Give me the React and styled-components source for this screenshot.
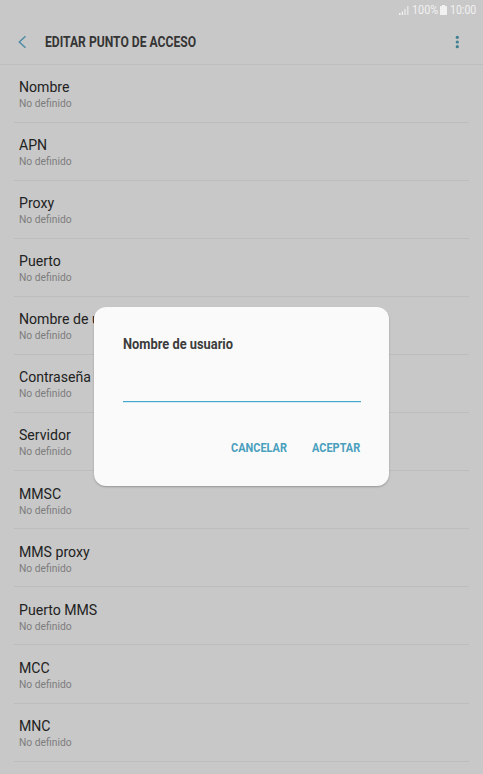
import React from 'react';
import styled, { createGlobalStyle } from 'styled-components';

const GlobalStyle = createGlobalStyle`
  * {
    box-sizing: border-box;
  }
  body {
    margin: 0;
    background-color: #c8c8c8;
    font-family: Roboto, "Liberation Sans", sans-serif;
    overflow: hidden;
  }
`;
const Screen = styled.div`
  position: relative;
  height: 100vh;
  overflow: hidden;
  background-color: #c8c8c8;
`;
const StatusBar = styled.div`
  display: flex;
  align-items: center;
  justify-content: flex-end;
  height: 20px;
  padding-right: 6px;
  color: #f1f1f1;
  svg {
    display: block;
    flex: none;
  }
`;
const Condensed = styled.span`
  display: block;
  flex: none;
  width: ${(props) => props.$width}px;
  white-space: nowrap;
  transform: scaleX(${(props) => props.$scale || 0.88});
  transform-origin: left center;
`;
const StatusText = styled(Condensed)`
  font-size: 12px;
  line-height: 21px;
  margin-left: ${(props) => props.$gap}px;
`;
const Header = styled.header`
  display: flex;
  align-items: center;
  height: 45px;
  padding: 0 19px 0 17px;
  border-bottom: 1px solid #bfbfbf;
`;
const IconButton = styled.button`
  display: flex;
  flex: none;
  padding: 0;
  border: 0;
  background: none;
  color: #4b8ba5;
`;
const Title = styled.h1`
  flex: 1;
  margin: 0 0 0 17px;
  font-size: 14px;
  font-weight: 700;
  line-height: 20px;
  color: #353535;
`;
const List = styled.ul`
  margin: 0;
  padding: 0 14px;
  list-style: none;
`;
const Item = styled.li`
  height: 58.05px;
  padding: 13.2px 5px 0;
  border-bottom: 1px solid #bdbdbd;
`;
const Name = styled.p`
  margin: 0;
  font-size: 14.1px;
  line-height: 18px;
  color: #222;
`;
const Value = styled.p`
  margin: 0;
  font-size: 10.3px;
  line-height: 15px;
  color: #7d7d7d;
`;
const Overlay = styled.div`
  position: absolute;
  inset: 0;
  padding: 307px 94px 0;
`;
const Dialog = styled.div`
  height: 179px;
  padding: 27px 28.5px 0;
  border-radius: 12px;
  background-color: #fafafa;
  box-shadow: 0 1px 2px rgba(0, 0, 0, 0.25);
`;
const DialogTitle = styled.h2`
  margin: 0;
  font-size: 14px;
  font-weight: 700;
  line-height: 20px;
  color: #3c3c3c;
`;
const Field = styled.div`
  height: 30px;
  margin-top: 18px;
  border-bottom: 1px solid #45a8cc;
  box-shadow: 0 1px 0 rgba(69, 168, 204, 0.2);
`;
const Input = styled.input`
  display: block;
  width: 100%;
  height: 28px;
  padding: 0;
  border: 0;
  outline: 0;
  background: none;
  font: 14px Roboto, sans-serif;
`;
const Actions = styled.div`
  display: flex;
  justify-content: flex-end;
  gap: 25.5px;
  margin-top: 36px;
`;
const Button = styled.button`
  padding: 0;
  border: 0;
  background: none;
  font: 700 13px/20px Roboto, "Liberation Sans", sans-serif;
  text-align: left;
  color: #4a9fbd;
`;

const fields = [
  'Nombre',
  'APN',
  'Proxy',
  'Puerto',
  'Nombre de usuario',
  'Contraseña',
  'Servidor',
  'MMSC',
  'MMS proxy',
  'Puerto MMS',
  'MCC',
  'MNC',
];

const SignalIcon = () => (
  <svg width="11" height="11" viewBox="0 0 11 11" fill="currentColor">
    <path d="M0 8h1.500v2H0z" />
    <path d="M2.700 6.500h1.400V10H2.700z" />
    <path d="M5.300 4h1.400v6H5.300z" opacity=".8" />
    <path d="M8 1h1.500v9H8z" opacity=".65" />
  </svg>
);

const BatteryIcon = () => (
  <svg width="7" height="10" viewBox="0 0 7 10" fill="currentColor">
    <path d="M2 0h3v1h1.400q.6 0 .6.6v7.800q0 .6-.6.6H.6q-.6 0-.6-.6V1.600q0-.6.6-.6H2z" />
  </svg>
);

const App = () => {
  const [user, setUser] = React.useState('');

  return (
    <Screen>
      <GlobalStyle />
      <StatusBar>
        <SignalIcon />
        <StatusText $width={28} $scale={0.9} $gap={2}>100%</StatusText>
        <BatteryIcon />
        <StatusText $width={27.500} $scale={0.88} $gap={3}>10:00</StatusText>
      </StatusBar>
      <Header>
        <IconButton aria-label="Atrás">
          <svg width="11" height="14" viewBox="0 0 11 14" fill="none" stroke="currentColor" strokeWidth="1.4">
            <path d="M8.500 1.300L2.300 7l6.200 5.700" />
          </svg>
        </IconButton>
        <Title>
          <Condensed $width={151} $scale={0.866}>EDITAR PUNTO DE ACCESO</Condensed>
        </Title>
        <IconButton aria-label="Más opciones">
          <svg width="14" height="14" viewBox="0 0 14 14" fill="#3f7f92">
            <circle cx="7.300" cy="2.300" r="1.600" />
            <circle cx="7.300" cy="7" r="1.600" />
            <circle cx="7.300" cy="11.700" r="1.600" />
          </svg>
        </IconButton>
      </Header>
      <List>
        {fields.map((field) => (
          <Item key={field}>
            <Name>{field}</Name>
            <Value>No definido</Value>
          </Item>
        ))}
      </List>
      <Overlay>
        <Dialog role="dialog">
          <DialogTitle>
            <Condensed $width={111} $scale={0.918}>Nombre de usuario</Condensed>
          </DialogTitle>
          <Field>
            <Input value={user} onChange={(e) => setUser(e.target.value)} aria-label="Nombre de usuario" />
          </Field>
          <Actions>
            <Button>
              <Condensed $width={56} $scale={0.842}>CANCELAR</Condensed>
            </Button>
            <Button>
              <Condensed $width={48.500} $scale={0.842}>ACEPTAR</Condensed>
            </Button>
          </Actions>
        </Dialog>
      </Overlay>
    </Screen>
  );
};

export default App;
